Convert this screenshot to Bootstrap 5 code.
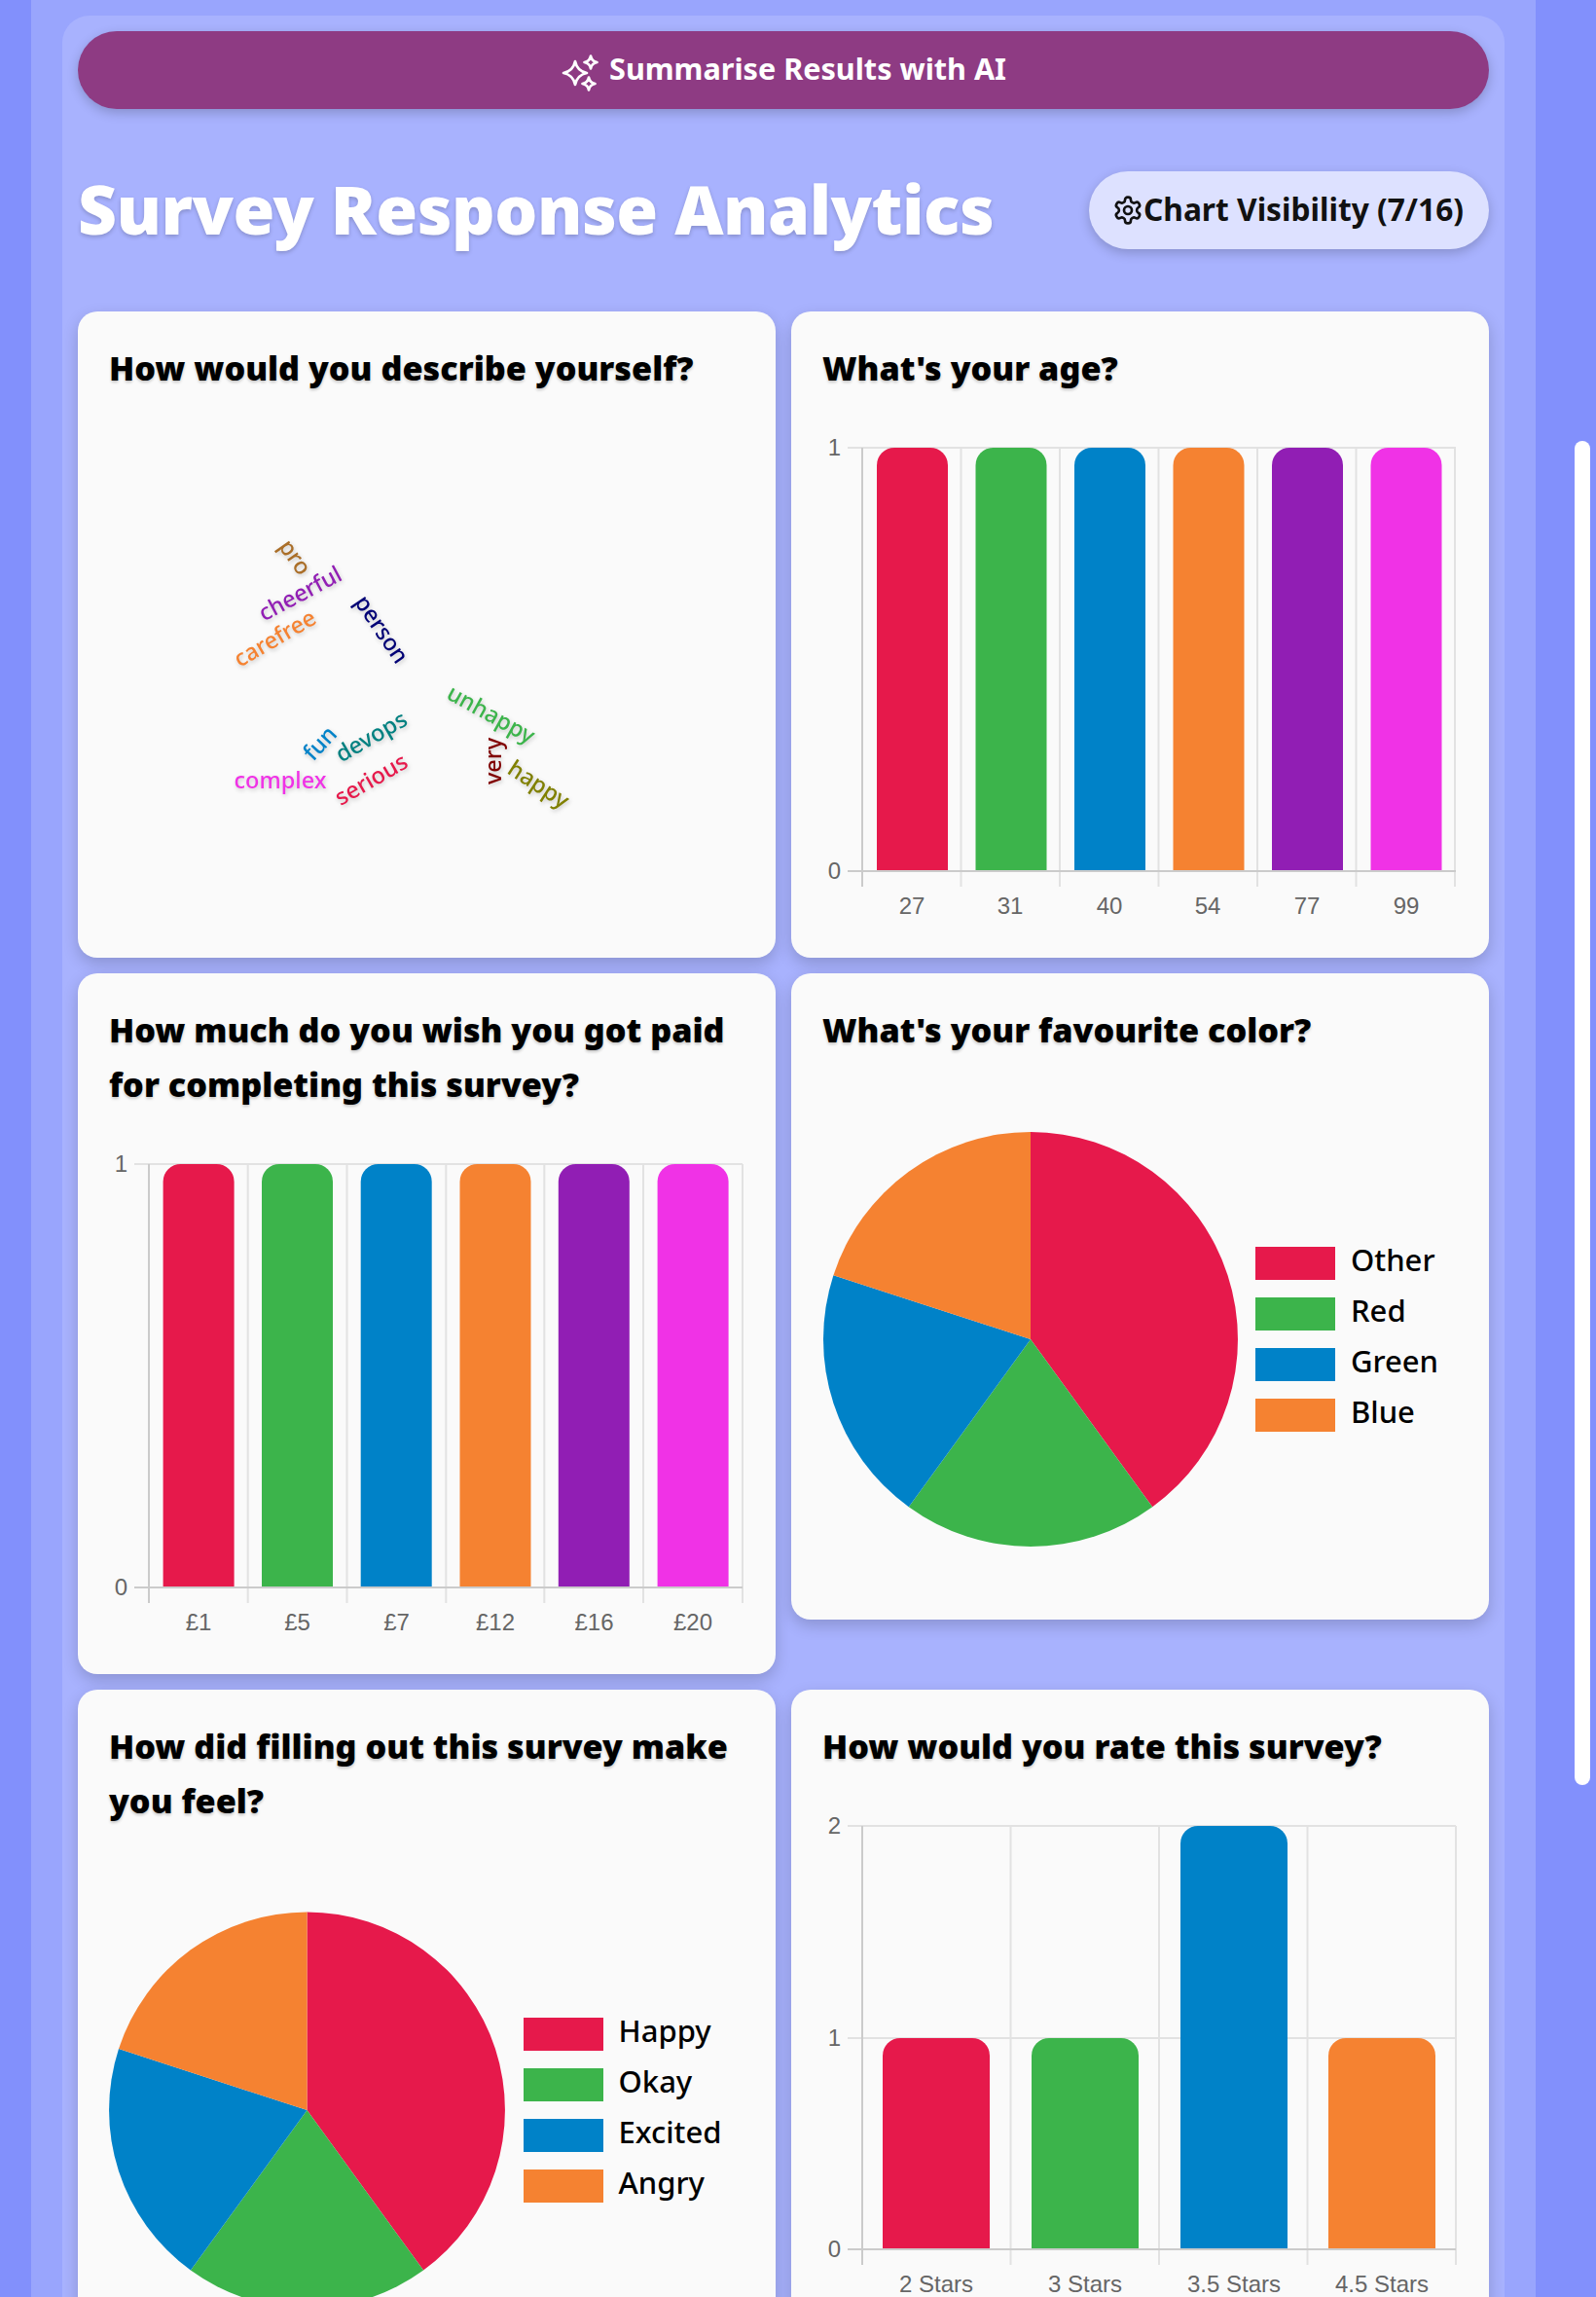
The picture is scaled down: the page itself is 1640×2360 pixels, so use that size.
<!doctype html>
<html lang="en">
<head>
<meta charset="utf-8">
<title>Survey Response Analytics</title>
<link href="https://cdn.jsdelivr.net/npm/bootstrap@5.3.0/dist/css/bootstrap.min.css" rel="stylesheet">
<style>
html,body{height:2360px;overflow:hidden;}
body{background:#8290fc;font-family:"Noto Sans",sans-serif;color:#000;position:relative;}
.shell{width:1546px;margin-left:32px;background:#99a5fd;padding:16px 32px 0;height:2360px;}
.panel{background:#a8b2fe;border-radius:28px 28px 0 0;padding:16px;min-height:2344px;}
.ai-btn{height:80px;border-radius:40px;background:#8e3b83;color:#fff;border:0;font-size:30.600px;font-weight:700;box-shadow:0 4px 12px rgba(0,0,0,.2);padding-bottom:9px;gap:10px;}
.ai-btn:hover{background:#8e3b83;color:#fff;}
.ai-btn svg{margin-top:9px;}
.head-block{margin:64px 0;height:80px;}
.head-title{font-size:69.400px;font-weight:900;color:#fff;text-shadow:0 2px 4px rgba(0,0,0,.2);margin:-5px 0 0;line-height:80px;letter-spacing:-.5px;}
.vis-btn{height:80px;border-radius:40px;background:#dde1ff;color:#111;border:0;padding:0 26px 3px 24px;font-size:31.700px;font-weight:700;box-shadow:0 4px 12px rgba(0,0,0,.2);white-space:nowrap;}
.vis-btn svg{margin-top:3px;}
.vis-btn:hover{background:#dde1ff;color:#111;}
.chart-card{background:#fafafa;border:0;border-radius:20px;padding:32px;box-shadow:0 6px 16px rgba(0,0,0,.18);}
.chart-title{font-size:34.200px;font-weight:900;line-height:56px;margin:-2.500px 0 18.500px;color:#000;text-shadow:0 2px 3px rgba(0,0,0,.2);}
.chart-svg{display:block;width:653px;height:528px;overflow:visible;}
.ax{font-family:"Liberation Sans",sans-serif;font-size:24px;fill:#666;}
.grid-l{stroke:#e2e2e2;stroke-width:2;fill:none;}
.axis-l{stroke:#cbcbcb;stroke-width:2;fill:none;}
.leg{font-family:"Noto Sans",sans-serif;font-size:31px;font-weight:500;fill:#000;transform:translateY(1px);}
.cloud{font-family:"Noto Sans",sans-serif;font-size:23.500px;font-weight:500;filter:drop-shadow(1px 2px 2px rgba(0,0,0,.2));}
.thumb{position:absolute;left:1618px;top:453px;width:16px;height:1381px;background:#fff;border-radius:8px;}
</style>
</head>
<body>
<div class="shell">
<main class="panel">
<button type="button" class="btn ai-btn w-100 d-flex align-items-center justify-content-center">
<svg width="40" height="40" viewBox="0 0 40 40" fill="none" stroke="#fff" stroke-width="2.700" stroke-linejoin="round"><path d="M15 8Q17 18 27 20 17 22 15 32 13 22 3 20 13 18 15 8z"/><path d="M31 2.500Q32 8 37.500 9 32 10 31 15.500 30 10 24.500 9 30 8 31 2.500z"/><path d="M29 24.500Q30 30 35.500 31 30 32 29 37.500 28 32 22.500 31 28 30 29 24.500z"/></svg>
<span>Summarise Results with AI</span>
</button>
<header class="head-block d-flex align-items-center justify-content-between">
<h1 class="head-title">Survey Response Analytics</h1>
<button type="button" class="btn vis-btn d-flex align-items-center">
<svg width="32" height="32" viewBox="0 0 24 24" fill="none" stroke="#111" stroke-width="2" stroke-linecap="round" stroke-linejoin="round"><path d="M12.220 2h-.44a2 2 0 0 0-2 2v.18a2 2 0 0 1-1 1.730l-.43.25a2 2 0 0 1-2 0l-.15-.08a2 2 0 0 0-2.730.73l-.22.38a2 2 0 0 0 .73 2.730l.15.1a2 2 0 0 1 1 1.720v.51a2 2 0 0 1-1 1.740l-.15.09a2 2 0 0 0-.73 2.730l.22.38a2 2 0 0 0 2.730.73l.15-.08a2 2 0 0 1 2 0l.43.25a2 2 0 0 1 1 1.730V20a2 2 0 0 0 2 2h.44a2 2 0 0 0 2-2v-.18a2 2 0 0 1 1-1.730l.43-.25a2 2 0 0 1 2 0l.15.08a2 2 0 0 0 2.730-.73l.22-.39a2 2 0 0 0-.73-2.730l-.15-.08a2 2 0 0 1-1-1.740v-.5a2 2 0 0 1 1-1.740l.15-.09a2 2 0 0 0 .73-2.730l-.22-.38a2 2 0 0 0-2.730-.73l-.15.08a2 2 0 0 1-2 0l-.43-.25a2 2 0 0 1-1-1.730V4a2 2 0 0 0-2-2z"/><circle cx="12" cy="12" r="3"/></svg>
<span>Chart Visibility (7/16)</span>
</button>
</header>
<div class="row g-3 align-items-start">

<div class="col-6"><section class="card chart-card">
<h2 class="chart-title">How would you describe yourself?</h2>
<svg class="chart-svg" viewBox="0 0 653 528">
<g class="cloud" text-anchor="middle" dominant-baseline="central">
<text transform="translate(192 148) rotate(55)" fill="#aa6e28">pro</text>
<text transform="translate(196 185) rotate(-28)" fill="#911eb4">cheerful</text>
<text transform="translate(170 231) rotate(-30)" fill="#f58231">carefree</text>
<text transform="translate(281 222) rotate(56)" fill="#000075">person</text>
<text transform="translate(393 309) rotate(29)" fill="#3cb44b">unhappy</text>
<text transform="translate(394 358) rotate(-90)" fill="#800000">very</text>
<text transform="translate(442 381) rotate(33)" fill="#808000">happy</text>
<text transform="translate(216 339) rotate(-47)" fill="#0082c8">fun</text>
<text transform="translate(269 332) rotate(-30)" fill="#008080">devops</text>
<text transform="translate(269 376) rotate(-30)" fill="#e6194b">serious</text>
<text transform="translate(176 377)" fill="#f032e6">complex</text>
</g>
</svg>
</section></div>

<div class="col-6"><section class="card chart-card">
<h2 class="chart-title">What's your age?</h2>
<svg class="chart-svg" viewBox="0 0 653 528">
<path class="grid-l" d="M26 36H651M142.500 36V487M244 36V487M345.500 36V487M447 36V487M548.500 36V487M650 36V487"/>
<path class="axis-l" d="M41 36V487M26 471H651"/>
<path fill="#e6194b" d="M56 470V54a18 18 0 0 1 18-18h37a18 18 0 0 1 18 18V470z"/>
<path fill="#3cb44b" d="M157.500 470V54a18 18 0 0 1 18-18h37a18 18 0 0 1 18 18V470z"/>
<path fill="#0082c8" d="M259 470V54a18 18 0 0 1 18-18h37a18 18 0 0 1 18 18V470z"/>
<path fill="#f58231" d="M360.500 470V54a18 18 0 0 1 18-18h37a18 18 0 0 1 18 18V470z"/>
<path fill="#911eb4" d="M462 470V54a18 18 0 0 1 18-18h37a18 18 0 0 1 18 18V470z"/>
<path fill="#f032e6" d="M563.500 470V54a18 18 0 0 1 18-18h37a18 18 0 0 1 18 18V470z"/>
<g class="ax" text-anchor="end"><text x="19" y="44">1</text><text x="19" y="479">0</text></g>
<g class="ax" text-anchor="middle"><text x="92" y="515">27</text><text x="193" y="515">31</text><text x="295" y="515">40</text><text x="396" y="515">54</text><text x="498" y="515">77</text><text x="600" y="515">99</text></g>
</svg>
</section></div>

<div class="col-6"><section class="card chart-card">
<h2 class="chart-title">How much do you wish you got paid for completing this survey?</h2>
<svg class="chart-svg" viewBox="0 0 653 528">
<path class="grid-l" d="M26 36H651M142.700 36V487M244.500 36V487M346.300 36V487M447.300 36V487M549 36V487M651 36V487"/>
<path class="axis-l" d="M41 36V487M26 471H651"/>
<path fill="#e6194b" d="M55.600 470V54a18 18 0 0 1 18-18h37a18 18 0 0 1 18 18V470z"/>
<path fill="#3cb44b" d="M157 470V54a18 18 0 0 1 18-18h37a18 18 0 0 1 18 18V470z"/>
<path fill="#0082c8" d="M258.700 470V54a18 18 0 0 1 18-18h37a18 18 0 0 1 18 18V470z"/>
<path fill="#f58231" d="M360.500 470V54a18 18 0 0 1 18-18h37a18 18 0 0 1 18 18V470z"/>
<path fill="#911eb4" d="M461.800 470V54a18 18 0 0 1 18-18h37a18 18 0 0 1 18 18V470z"/>
<path fill="#f032e6" d="M563.600 470V54a18 18 0 0 1 18-18h37a18 18 0 0 1 18 18V470z"/>
<g class="ax" text-anchor="end"><text x="19" y="44">1</text><text x="19" y="479">0</text></g>
<g class="ax" text-anchor="middle"><text x="92" y="515">£1</text><text x="193.500" y="515">£5</text><text x="295.500" y="515">£7</text><text x="397" y="515">£12</text><text x="498.500" y="515">£16</text><text x="600" y="515">£20</text></g>
</svg>
</section></div>

<div class="col-6"><section class="card chart-card">
<h2 class="chart-title">What's your favourite color?</h2>
<svg class="chart-svg" viewBox="0 0 653 528">
<path fill="#e6194b" d="M214 272V59A213 213 0 0 1 339.200 444.300z"/>
<path fill="#3cb44b" d="M214 272L339.200 444.300A213 213 0 0 1 88.800 444.300z"/>
<path fill="#0082c8" d="M214 272L88.800 444.300A213 213 0 0 1 11.400 206.200z"/>
<path fill="#f58231" d="M214 272L11.400 206.200A213 213 0 0 1 214 59z"/>
<rect x="445" y="177" width="82" height="34" fill="#e6194b"/><rect x="445" y="229" width="82" height="34" fill="#3cb44b"/><rect x="445" y="281" width="82" height="34" fill="#0082c8"/><rect x="445" y="333" width="82" height="34" fill="#f58231"/>
<g class="leg"><text x="543" y="201">Other</text><text x="543" y="253">Red</text><text x="543" y="305">Green</text><text x="543" y="357">Blue</text></g>
</svg>
</section></div>

<div class="col-6"><section class="card chart-card">
<h2 class="chart-title">How did filling out this survey make you feel?</h2>
<svg class="chart-svg" viewBox="0 0 653 528">
<path fill="#e6194b" d="M203.500 272V68.500A203.500 203.500 0 0 1 323.100 436.600z"/>
<path fill="#3cb44b" d="M203.500 272L323.100 436.600A203.500 203.500 0 0 1 83.900 436.600z"/>
<path fill="#0082c8" d="M203.500 272L83.900 436.600A203.500 203.500 0 0 1 10 209.100z"/>
<path fill="#f58231" d="M203.500 272L10 209.100A203.500 203.500 0 0 1 203.500 68.500z"/>
<rect x="426" y="177" width="82" height="34" fill="#e6194b"/><rect x="426" y="229" width="82" height="34" fill="#3cb44b"/><rect x="426" y="281" width="82" height="34" fill="#0082c8"/><rect x="426" y="333" width="82" height="34" fill="#f58231"/>
<g class="leg"><text x="523.500" y="201">Happy</text><text x="523.500" y="253">Okay</text><text x="523.500" y="305">Excited</text><text x="523.500" y="357">Angry</text></g>
</svg>
</section></div>

<div class="col-6"><section class="card chart-card">
<h2 class="chart-title">How would you rate this survey?</h2>
<svg class="chart-svg" viewBox="0 0 653 528">
<path class="grid-l" d="M26 36H651M26 254H651M193.500 36V487M346 36V487M498.500 36V487M651 36V487"/>
<path class="axis-l" d="M41 36V487M26 471H651"/>
<path fill="#e6194b" d="M62 470V272a18 18 0 0 1 18-18h74a18 18 0 0 1 18 18V470z"/>
<path fill="#3cb44b" d="M215 470V272a18 18 0 0 1 18-18h74a18 18 0 0 1 18 18V470z"/>
<path fill="#0082c8" d="M368 470V54a18 18 0 0 1 18-18h74a18 18 0 0 1 18 18V470z"/>
<path fill="#f58231" d="M520 470V272a18 18 0 0 1 18-18h74a18 18 0 0 1 18 18V470z"/>
<g class="ax" text-anchor="end"><text x="19" y="44">2</text><text x="19" y="262">1</text><text x="19" y="479">0</text></g>
<g class="ax" text-anchor="middle"><text x="117" y="515">2 Stars</text><text x="270" y="515">3 Stars</text><text x="423" y="515">3.5 Stars</text><text x="575" y="515">4.5 Stars</text></g>
</svg>
</section></div>

</div>
</main>
</div>
<div class="thumb"></div>
<script src="https://cdn.jsdelivr.net/npm/bootstrap@5.3.0/dist/js/bootstrap.bundle.min.js"></script>
</body>
</html>
